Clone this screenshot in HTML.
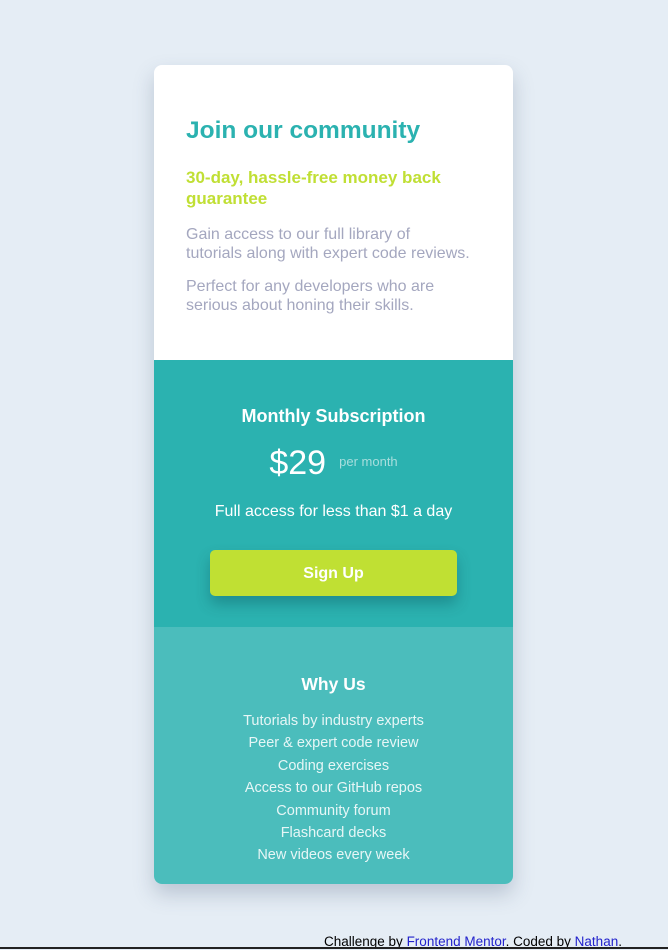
<!DOCTYPE html>
<html><head><meta charset="utf-8"><style>
body{margin:0;width:668px;height:950px;background:#e5edf5;font-family:"Liberation Sans",sans-serif;position:relative;overflow:hidden}
.card{position:absolute;left:154px;top:65px;width:359px;height:819px;border-radius:8px;overflow:hidden;box-shadow:0 10px 20px rgba(60,80,110,.25)}
.top{position:absolute;left:0;top:0;width:359px;height:295px;background:#fff}
.mid{position:absolute;left:0;top:295px;width:359px;height:267px;background:#2bb2b0}
.bot{position:absolute;left:0;top:562px;width:359px;height:257px;background:#4bbdbc}
.a{position:absolute;white-space:nowrap}
h1{position:absolute;left:32px;top:52px;margin:0;font-size:24.5px;color:#2bb2b0;font-weight:bold}
.g{left:32px;top:102px;font-size:17px;font-weight:bold;color:#c0df34;line-height:21px}
.p{left:32px;font-size:16px;color:#a4a7bf;line-height:19px}
.c{left:0;width:359px;text-align:center;color:#fff}
.btn{position:absolute;left:56px;top:190px;width:247px;height:46px;background:#c0e033;border-radius:5px;box-shadow:0 8px 14px rgba(0,60,70,.3);color:#fff;font-weight:bold;font-size:16px;text-align:center;line-height:48px}
.li{font-size:14.5px;color:#e6f6f6}
.foot{position:absolute;left:324px;top:934px;font-size:13.5px;color:#000}
.foot a{color:#2222cc;text-decoration:underline}
.line{position:absolute;left:0;top:947px;width:668px;height:2px;background:#222}
</style></head><body>
<div class="card">
<div class="top">
<h1>Join our community</h1>
<div class="a g">30-day, hassle-free money back<br>guarantee</div>
<div class="a p" style="top:160px">Gain access to our full library of<br>tutorials along with expert code reviews.</div>
<div class="a p" style="top:212px">Perfect for any developers who are<br>serious about honing their skills.</div>
</div>
<div class="mid">
<div class="a c" style="top:46px;font-size:18px;font-weight:bold">Monthly Subscription</div>
<div class="a c" style="top:84px;font-size:34px"><span>$29</span> <span style="font-size:13px;color:#a8dedd;vertical-align:middle;position:relative;top:-4px">&nbsp;per month</span></div>
<div class="a c" style="top:143px;font-size:16px">Full access for less than $1 a day</div>
<div class="btn">Sign Up</div>
</div>
<div class="bot">
<div class="a c" style="top:47px;font-size:17.5px;font-weight:bold">Why Us</div>
<div class="a c li" style="top:83px;line-height:22.4px">Tutorials by industry experts<br>Peer &amp; expert code review<br>Coding exercises<br>Access to our GitHub repos<br>Community forum<br>Flashcard decks<br>New videos every week</div>
</div>
</div>
<div class="foot">Challenge by <a href="#">Frontend Mentor</a>. Coded by <a href="#">Nathan</a>.</div>
<div class="line"></div>
</body></html>
